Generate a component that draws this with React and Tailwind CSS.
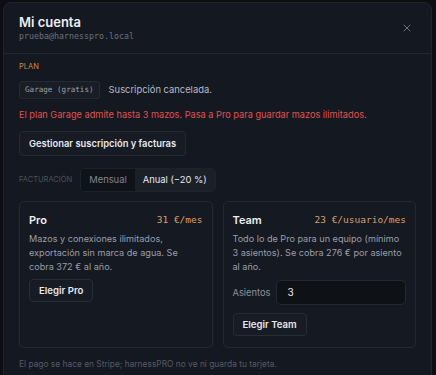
import { X } from 'lucide-react'

const sans = "font-['Inter','Liberation_Sans',sans-serif]"
const mono = "font-['DejaVu_Sans_Mono','Liberation_Mono',monospace]"

function Btn({ children }) {
  return (
    <button className="h-[23px] rounded-[4px] border border-[#272c36] bg-[#171b23] px-[9px] text-[9.6px] font-semibold leading-[12px] text-[#e6e8ec]">
      {children}
    </button>
  )
}

export default function App() {
  return (
    <div className={`h-[375px] overflow-hidden bg-[#0c0e13] pl-[3px] pr-[4px] pt-[2px] ${sans}`}>
      <div className="h-[400px] rounded-t-[8px] border border-[#1f232c] bg-[#141820]">
        {/* HEADER */}
        <div className="flex items-start justify-between border-b border-[#222732] px-[15px] pt-[11px] pb-[11px]">
          <div>
            <h1 className="text-[13px] font-semibold leading-[16px] text-[#eceef1]">Mi cuenta</h1>
            <p className={`mt-[1px] text-[8.3px] leading-[11px] text-[#6b7280] ${mono}`}>prueba@harnesspro.local</p>
          </div>
          <X className="mr-[3px] mt-[8px] h-[12px] w-[12px] text-[#6b717c]" strokeWidth={2} />
        </div>

        <div className="px-[15px] pt-[7px]">
          {/* PLAN */}
          <p className="text-[7.5px] uppercase leading-[12px] text-[#d08a45]">Plan</p>
          <div className="mt-[8px] flex items-center gap-[9px]">
            <span className={`rounded-[3px] border border-[#242934] bg-[#191d25] px-[5px] py-[3px] text-[7.6px] leading-[10px] text-[#9aa0aa] ${mono}`}>
              Garage (gratis)
            </span>
            <span className="text-[9.4px] leading-[12px] text-[#b7bcc5]">Suscripción cancelada.</span>
          </div>
          <p className="mt-[9px] text-[9.2px] leading-[14px] text-[#e0524f]">
            El plan Garage admite hasta 3 mazos. Pasa a Pro para guardar mazos ilimitados.
          </p>

          <div className="mt-[9px] flex">
            <button className="h-[25px] rounded-[4px] border border-[#252a34] bg-[#171b23] px-[9px] text-[9.4px] font-semibold leading-[12px] text-[#e6e8ec]">
              Gestionar suscripción y facturas
            </button>
          </div>

          {/* FACTURACION */}
          <div className="mt-[12px] flex items-center gap-[8px]">
            <span className="text-[7.5px] uppercase leading-[10px] text-[#4b515c]">Facturación</span>
            <div className="flex h-[24px] overflow-hidden rounded-[4px] border border-[#1e222b] bg-[#0f1218]">
              <span className="flex items-center px-[8px] text-[9.4px] text-[#80868f]">Mensual</span>
              <span className="flex items-center bg-[#1b1f28] px-[8px] text-[9.4px] text-[#e6e8ec]">Anual (−20 %)</span>
            </div>
          </div>

          {/* CARDS */}
          <div className="mt-[9px] grid grid-cols-2 gap-[10px]">
            <div className="h-[147px] rounded-[5px] border border-[#232833] bg-[#151921] px-[9px] pt-[11px]">
              <div className="flex items-center justify-between leading-[14px]">
                <span className="text-[11px] font-semibold text-[#eceef1]">Pro</span>
                <span className={`text-[9.5px] text-[#d8a06a] ${mono}`}>31 €/mes</span>
              </div>
              <p className="mt-[5px] text-[9.1px] leading-[14px] text-[#9a9fa8]">
                Mazos y conexiones ilimitados, exportación sin marca de agua. Se cobra 372 € al año.
              </p>
              <div className="mt-[5px] flex">
                <Btn>Elegir Pro</Btn>
              </div>
            </div>
            <div className="h-[147px] rounded-[5px] border border-[#232833] bg-[#151921] px-[9px] pt-[11px]">
              <div className="flex items-center justify-between leading-[14px]">
                <span className="text-[11px] font-semibold text-[#eceef1]">Team</span>
                <span className={`text-[9.5px] text-[#d8a06a] ${mono}`}>23 €/usuario/mes</span>
              </div>
              <p className="mt-[5px] text-[9.1px] leading-[14px] text-[#9a9fa8]">
                Todo lo de Pro para un equipo (mínimo 3 asientos). Se cobra 276 € por asiento al año.
              </p>
              <div className="mt-[6px] flex items-center gap-[6px]">
                <span className="text-[9.3px] leading-[12px] text-[#8d929b]">Asientos</span>
                <div className="flex h-[25px] flex-1 items-center rounded-[5px] border border-[#232833] bg-[#0e1116] px-[10px] text-[10px] text-[#e6e8ec]">
                  3
                </div>
              </div>
              <div className="mt-[8px] flex">
                <Btn>Elegir Team</Btn>
              </div>
            </div>
          </div>

          <p className="mt-[10px] text-[8.4px] leading-[12px] text-[#555b66]">
            El pago se hace en Stripe; harnessPRO no ve ni guarda tu tarjeta.
          </p>
        </div>
      </div>
    </div>
  )
}
